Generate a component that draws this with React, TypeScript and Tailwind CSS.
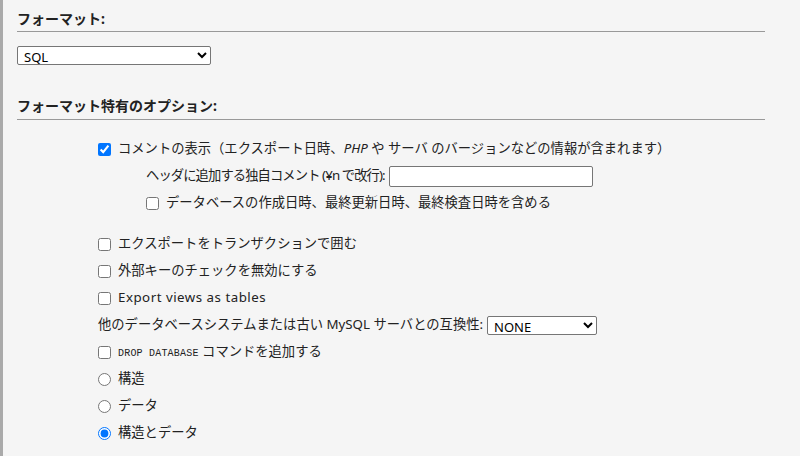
import React from 'react';

const jp = { fontFamily: '"Noto Sans", "Noto Sans CJK JP", sans-serif' };

const Row: React.FC<{ indent?: boolean; children: React.ReactNode }> = ({ indent, children }) => (
  <div className={`flex items-center h-[27px] ${indent ? 'pl-[129px]' : 'pl-[81px]'}`}>{children}</div>
);

const Check: React.FC<{ checked?: boolean; label: React.ReactNode }> = ({ checked, label }) => (
  <label className="flex items-center gap-[7px]">
    <input type="checkbox" defaultChecked={checked} className="w-[13px] h-[13px] m-0" />
    <span>{label}</span>
  </label>
);

const Radio: React.FC<{ checked?: boolean; label: string }> = ({ checked, label }) => (
  <label className="flex items-center gap-[7px]">
    <input type="radio" name="structure_or_data" defaultChecked={checked} className="w-[13px] h-[13px] m-0" />
    <span>{label}</span>
  </label>
);

export default function App() {
  return (
    <div className="w-[800px] h-[456px] bg-[#f5f5f5] border-l-[3px] border-[#aaaaaa] text-[13.3px] text-[#222] overflow-hidden" style={jp}>
      <div className="pl-[14px] pr-[35px]">
        {/* フォーマット */}
        <h3 className="font-bold text-[14px] pt-[9px] pb-[2px] border-b border-[#999] leading-[20px]">フォーマット:</h3>
        <div className="mt-[14px]">
          <select className="w-[194px] h-[19px] bg-white border border-[#767676] rounded-[2px] text-[13px] px-[2px] text-black leading-[17px]">
            <option>SQL</option>
          </select>
        </div>

        {/* フォーマット特有のオプション */}
        <h3 className="font-bold text-[14px] mt-[28px] pb-[3px] border-b border-[#999] leading-[20px]">フォーマット特有のオプション:</h3>

        <div className="mt-[16px]">
          <Row>
            <Check
              checked
              label={<>コメントの表示（エクスポート日時、<i>PHP</i> や サーバ のバージョンなどの情報が含まれます）</>}
            />
          </Row>
          <Row indent>
            <span className="tracking-[-0.9px]">ヘッダに追加する独自コメント (¥n で改行):</span>
            <input type="text" className="ml-[4px] w-[204px] h-[21px] bg-white border border-[#767676] rounded-[2px]" />
          </Row>
          <Row indent>
            <Check label="データベースの作成日時、最終更新日時、最終検査日時を含める" />
          </Row>
        </div>

        <div className="mt-[14px]">
          <Row>
            <Check label="エクスポートをトランザクションで囲む" />
          </Row>
          <Row>
            <Check label="外部キーのチェックを無効にする" />
          </Row>
          <Row>
            <Check label={<span className="tracking-[0.5px]">Export views as tables</span>} />
          </Row>
          <Row>
            <span>他のデータベースシステムまたは古い MySQL サーバとの互換性:</span>
            <select className="ml-[4px] w-[110px] h-[19px] bg-white border border-[#767676] rounded-[2px] text-[13px] px-[2px] text-black leading-[17px]">
              <option>NONE</option>
            </select>
          </Row>
          <Row>
            <Check
              label={
                <>
                  <code className="text-[10px] tracking-[0.2px]" style={{ fontFamily: '"Liberation Mono", monospace' }}>DROP DATABASE</code> コマンドを追加する
                </>
              }
            />
          </Row>
          <Row>
            <Radio label="構造" />
          </Row>
          <Row>
            <Radio label="データ" />
          </Row>
          <Row>
            <Radio checked label="構造とデータ" />
          </Row>
        </div>
      </div>
    </div>
  );
}
